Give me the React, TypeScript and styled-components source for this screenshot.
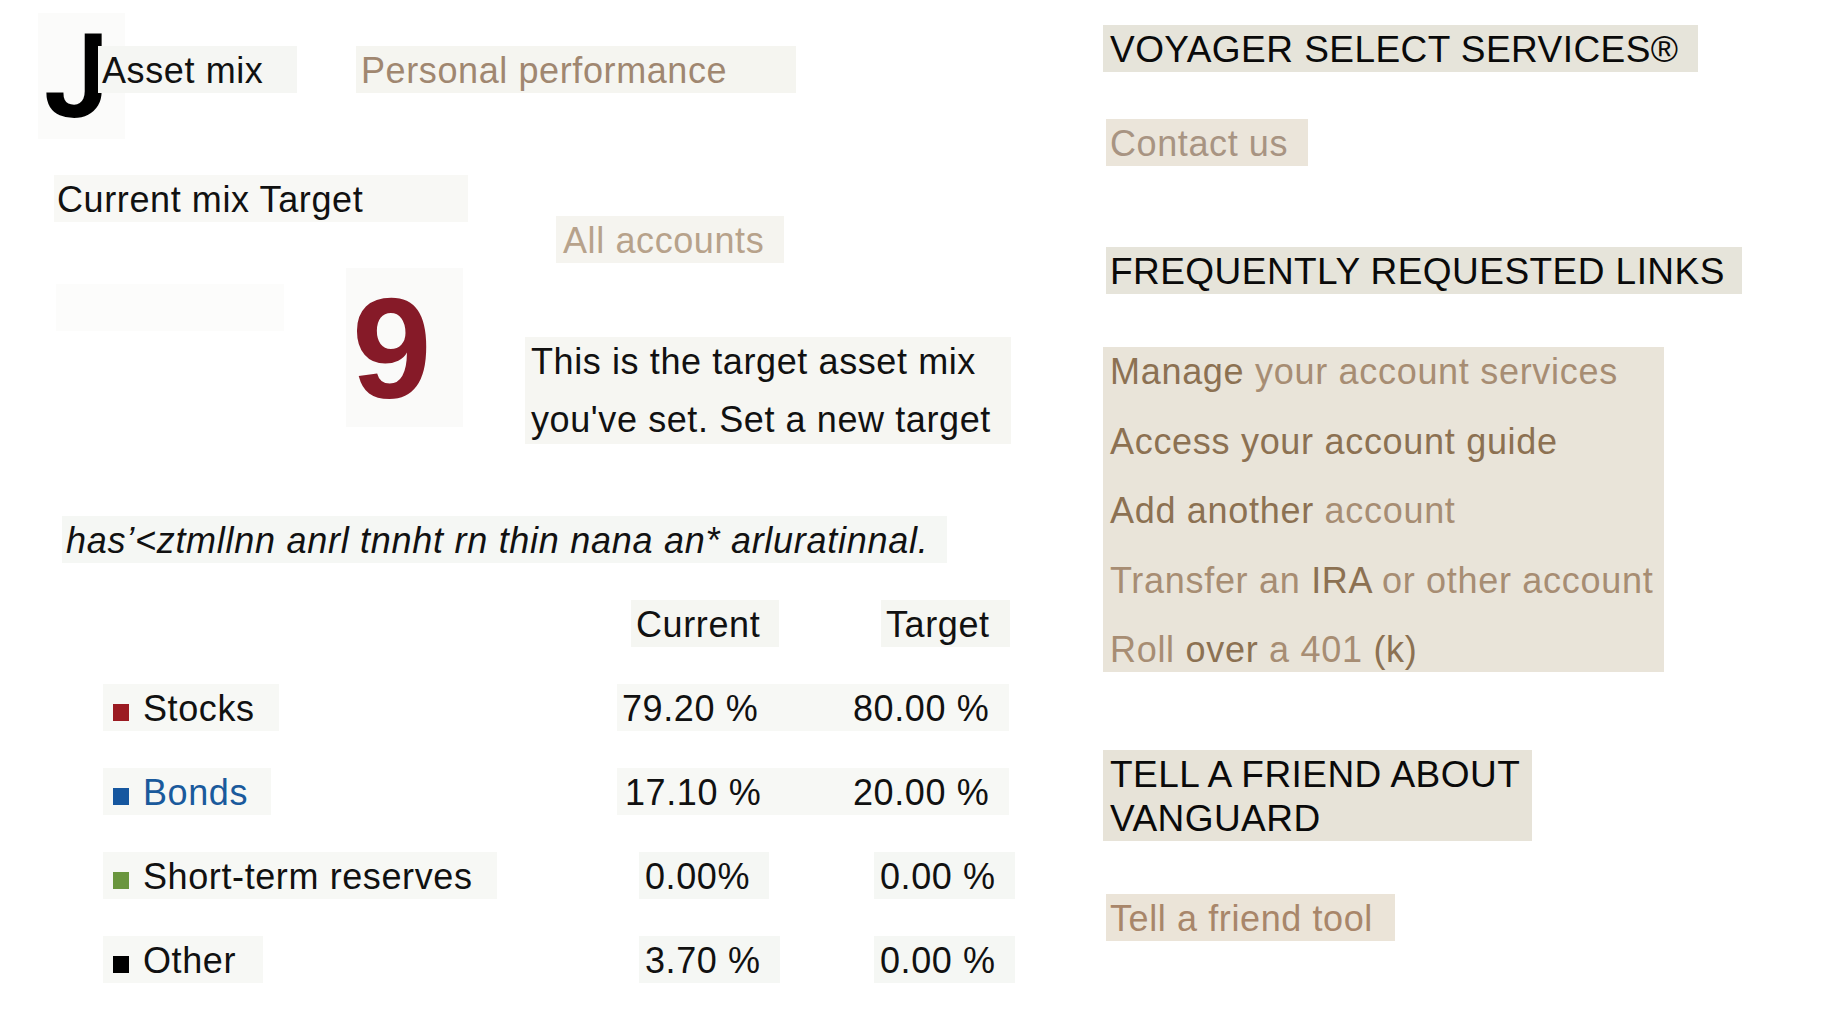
import React from "react";
import styled, { createGlobalStyle } from "styled-components";

const Global = createGlobalStyle`
  html, body { margin: 0; padding: 0; background: #ffffff; }
  body { font-family: "Liberation Sans", Arial, sans-serif; }
`;

const Page = styled.div`
  display: flex;
  align-items: flex-start;
  width: 1834px;
  min-height: 1031px;
  box-sizing: border-box;
  padding-left: 38px;
  font-family: "Liberation Sans", Arial, sans-serif;
  font-size: 36px;
  letter-spacing: 0.6px;
  color: #111111;
`;

const LeftColumn = styled.div`
  flex: none;
  width: 1065px;
  display: flex;
  flex-direction: column;
  align-items: flex-start;
  padding-top: 13px;
`;

const RightColumn = styled.div`
  flex: 1;
  display: flex;
  flex-direction: column;
  align-items: flex-start;
  padding-top: 25px;
`;

/* generic one-line chip */
const Chip = styled.div<{ $w: number; $pl?: number; $bg?: string; $color?: string }>`
  box-sizing: border-box;
  flex: none;
  width: ${(p) => p.$w}px;
  height: 47px;
  padding: 3px 0 0 ${(p) => p.$pl ?? 5}px;
  line-height: 44px;
  white-space: nowrap;
  background: ${(p) => p.$bg ?? "#f6f7f4"};
  color: ${(p) => p.$color ?? "#111111"};
`;

/* ---------- top row ---------- */
const TopRow = styled.div`
  display: flex;
  align-items: flex-start;
`;

const MonogramBox = styled.div`
  box-sizing: border-box;
  width: 87px;
  height: 126px;
  padding: 7px 0 0 6px;
  background: #fbfbfa;
  font-family: Roboto, "Liberation Sans", Arial, sans-serif;
  font-weight: 700;
  font-size: 116px;
  line-height: 114px;
  letter-spacing: 0;
  color: #000;
`;

const AssetTab = styled(Chip)`
  margin: 33px 0 0 -27px;
  position: relative;
`;

const PerformanceTab = styled(Chip)`
  margin: 33px 0 0 59px;
`;

/* ---------- mix row ---------- */
const MixRow = styled.div`
  display: flex;
  align-items: flex-start;
  margin-top: 36px;
`;

const MixTitle = styled(Chip)`
  margin-left: 16px;
`;

const AccountsLink = styled(Chip)`
  margin: 41px 0 0 88px;
`;

/* ---------- target row ---------- */
const TargetRow = styled.div`
  display: flex;
  align-items: flex-start;
  margin-top: 5px;
`;

const BlankChip = styled(Chip)`
  margin: 16px 0 0 18px;
`;

const BigDigitBox = styled.div`
  box-sizing: border-box;
  width: 117px;
  height: 159px;
  margin-left: 62px;
  padding: 2px 0 0 6px;
  background: #fafaf9;
  color: #861a28;
  font-weight: 700;
  font-size: 143px;
  line-height: 157px;
  letter-spacing: 0;
`;

const NoteBox = styled.div`
  box-sizing: border-box;
  width: 486px;
  height: 107px;
  margin: 69px 0 0 62px;
  padding-left: 6px;
  background: #f6f6f2;
  line-height: 58px;
  white-space: nowrap;
`;

const NoteText = styled.p`
  margin: -4px 0 0 0;
`;

/* ---------- disclaimer ---------- */
const Disclaimer = styled(Chip)`
  margin: 72px 0 0 24px;
  font-style: italic;
  letter-spacing: 0.72px;
`;

/* ---------- table ---------- */
const MixTable = styled.div`
  display: flex;
  flex-direction: column;
  gap: 37px;
  margin-top: 37px;
`;

const TableRow = styled.div`
  display: grid;
  grid-template-columns: 579px 440px;
  align-items: start;
  height: 47px;
`;

const LabelCell = styled(Chip)`
  margin-left: 65px;
  padding-left: 10px;
`;

const Swatch = styled.span<{ $color: string }>`
  display: inline-block;
  width: 16px;
  height: 17px;
  margin-right: 14px;
  background: ${(p) => p.$color};
  vertical-align: 0;
`;

const ValueArea = styled.div`
  display: flex;
  align-items: flex-start;
`;

const ValueCell = styled(Chip)<{ $ml: number }>`
  margin-left: ${(p) => p.$ml}px;
`;

const PairCell = styled(Chip)`
  display: grid;
  grid-template-columns: 231px 1fr;
`;

const LeadValue = styled.span<{ $nudge?: number }>`
  padding-left: ${(p) => p.$nudge ?? 0}px;
`;

/* ---------- right column ---------- */
const SectionHeading = styled(Chip)<{ $ml?: number; $mt: number }>`
  margin: ${(p) => p.$mt}px 0 0 ${(p) => p.$ml ?? 0}px;
  font-size: 37px;
  letter-spacing: 0.45px;
  color: #0a0a0a;
`;

const TallHeading = styled(SectionHeading)`
  height: 91px;
  white-space: normal;
`;

const SideLink = styled(Chip)<{ $ml?: number; $mt: number }>`
  margin: ${(p) => p.$mt}px 0 0 ${(p) => p.$ml ?? 0}px;
`;

const LinkPanel = styled.div`
  box-sizing: border-box;
  width: 561px;
  height: 325px;
  margin-top: 53px;
  padding: 2px 0 0 7px;
  display: flex;
  flex-direction: column;
  gap: 23.5px;
  background: #e9e4d9;
  letter-spacing: 0.7px;
`;

const LinkLine = styled.div`
  line-height: 46px;
  white-space: nowrap;
`;

const Tone = styled.span<{ $dark?: boolean }>`
  color: ${(p) => (p.$dark ? "#8c7152" : "#a78d73")};
`;

const rows = [
  { label: "Stocks", color: "#9b1b22", text: "#111111", cur: "79.20 %", tgt: "80.00 %", w: 176, pair: true, nudge: 0 },
  { label: "Bonds", color: "#16579f", text: "#1a5a9c", cur: "17.10 %", tgt: "20.00 %", w: 168, pair: true, nudge: 3 },
  { label: "Short-term reserves", color: "#6a963e", text: "#111111", cur: "0.00%", tgt: "0.00 %", w: 394, pair: false, cw: 130 },
  { label: "Other", color: "#000000", text: "#111111", cur: "3.70 %", tgt: "0.00 %", w: 160, pair: false, cw: 141 },
];

export default function App() {
  return (
    <>
      <Global />
      <Page>
        <LeftColumn>
          <TopRow>
            <MonogramBox>J</MonogramBox>
            <AssetTab $w={199} $pl={4} $bg="#f5f6f3">Asset mix</AssetTab>
            <PerformanceTab $w={440} $pl={5} $bg="#f5f5f0" $color="#a08770">
              Personal performance
            </PerformanceTab>
          </TopRow>

          <MixRow>
            <MixTitle $w={414} $pl={3} $bg="#f8f8f5">Current mix Target</MixTitle>
            <AccountsLink $w={228} $pl={7} $bg="#f5f4ef" $color="#b7a28b">
              All accounts
            </AccountsLink>
          </MixRow>

          <TargetRow>
            <BlankChip $w={228} $bg="#fcfcfb" />
            <BigDigitBox>9</BigDigitBox>
            <NoteBox>
              <NoteText>
                This is the target asset mix
                <br />
                you've set. Set a new target
              </NoteText>
            </NoteBox>
          </TargetRow>

          <Disclaimer $w={885} $pl={4} $bg="#f5f7f4">
            has’&lt;ztmllnn anrl tnnht rn thin nana an* arluratinnal.
          </Disclaimer>

          <MixTable>
            <TableRow>
              <div />
              <ValueArea>
                <ValueCell $ml={14} $w={148} $pl={5} $bg="#f5f6f2">Current</ValueCell>
                <ValueCell $ml={102} $w={129} $pl={5} $bg="#f5f6f2">Target</ValueCell>
              </ValueArea>
            </TableRow>
            {rows.map((r) => (
              <TableRow key={r.label}>
                <LabelCell $w={r.w} $bg="#f7f8f5" $color={r.text}>
                  <Swatch $color={r.color} />
                  {r.label}
                </LabelCell>
                <ValueArea>
                  {r.pair ? (
                    <PairCell $w={392} $pl={5} $bg="#f7f8f5">
                      <LeadValue $nudge={r.nudge}>{r.cur}</LeadValue>
                      <span>{r.tgt}</span>
                    </PairCell>
                  ) : (
                    <>
                      <ValueCell $ml={22} $w={r.cw ?? 130} $pl={6} $bg="#f5f7f4">{r.cur}</ValueCell>
                      <ValueCell $ml={r.label === "Other" ? 94 : 105} $w={141} $pl={6} $bg="#f5f7f4">
                        {r.tgt}
                      </ValueCell>
                    </>
                  )}
                </ValueArea>
              </TableRow>
            ))}
          </MixTable>
        </LeftColumn>

        <RightColumn>
          <SectionHeading $w={595} $pl={7} $mt={0} $bg="#e6e4da">
            VOYAGER SELECT SERVICES®
          </SectionHeading>
          <SideLink $w={202} $pl={4} $ml={3} $mt={47} $bg="#ebe5da" $color="#a89482">
            Contact us
          </SideLink>
          <SectionHeading $w={636} $pl={4} $ml={3} $mt={81} $bg="#e6e4da">
            FREQUENTLY REQUESTED LINKS
          </SectionHeading>

          <LinkPanel>
            <LinkLine>
              <Tone $dark>Manage</Tone> <Tone>your account services</Tone>
            </LinkLine>
            <LinkLine>
              <Tone $dark>Access your account guide</Tone>
            </LinkLine>
            <LinkLine>
              <Tone $dark>Add another</Tone> <Tone>account</Tone>
            </LinkLine>
            <LinkLine>
              <Tone>Transfer an</Tone> <Tone $dark>IRA</Tone> <Tone>or other account</Tone>
            </LinkLine>
            <LinkLine>
              <Tone>Roll</Tone> <Tone $dark>over</Tone> <Tone>a 401</Tone> <Tone $dark>(k)</Tone>
            </LinkLine>
          </LinkPanel>

          <TallHeading $w={429} $pl={7} $mt={78} $bg="#e7e3d8">
            TELL A FRIEND ABOUT VANGUARD
          </TallHeading>
          <SideLink $w={289} $pl={4} $ml={3} $mt={53} $bg="#ebe4d8" $color="#a8866a">
            Tell a friend tool
          </SideLink>
        </RightColumn>
      </Page>
    </>
  );
}
